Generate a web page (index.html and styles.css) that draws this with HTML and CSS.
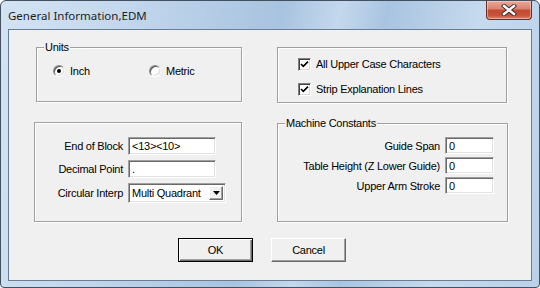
FILE: index.html
```html
<!DOCTYPE html>
<html>
<head>
<meta charset="utf-8">
<link rel="stylesheet" href="styles.css">
</head>
<body>
<div class="window">
  <div class="titlebar">
    <span class="title">General Information,EDM</span>
    <div class="close">
      <svg width="18" height="12" viewBox="0 0 18 12"><path d="M4 2 L14 10 M14 2 L4 10" stroke="#3a2a2a" stroke-width="4.2" stroke-linecap="square"/><path d="M4 2 L14 10 M14 2 L4 10" stroke="#fff" stroke-width="2.4" stroke-linecap="square"/></svg>
    </div>
  </div>
  <div class="client">
    <div class="groups">
      <div class="group units">
        <span class="legend">Units</span>
        <div class="radio-row">
          <span class="radio inch"><span class="rb"><span class="dot"></span></span>Inch</span>
          <span class="radio"><span class="rb"></span>Metric</span>
        </div>
      </div>
      <div class="group checks">
        <div class="check"><span class="cb"><svg width="9" height="9" viewBox="0 0 9 9"><path d="M1 4 L3.3 6.3 L8 1.6" fill="none" stroke="#000" stroke-width="1.7"/></svg></span>All Upper Case Characters</div>
        <div class="check"><span class="cb"><svg width="9" height="9" viewBox="0 0 9 9"><path d="M1 4 L3.3 6.3 L8 1.6" fill="none" stroke="#000" stroke-width="1.7"/></svg></span>Strip Explanation Lines</div>
      </div>
      <div class="group fields">
        <span class="lbl">End of Block</span><span class="edit">&lt;13&gt;&lt;10&gt;</span>
        <span class="lbl">Decimal Point</span><span class="edit">.</span>
        <span class="lbl">Circular Interp</span>
        <span class="combo"><span class="combo-text">Multi Quadrant</span><span class="drop"><svg width="7" height="4" viewBox="0 0 7 4"><path d="M0 0 H7 L3.5 4 Z" fill="#000"/></svg></span></span>
      </div>
      <div class="group machine">
        <span class="legend">Machine Constants</span>
        <span class="lbl">Guide Span</span><span class="edit">0</span>
        <span class="lbl">Table Height (Z Lower Guide)</span><span class="edit">0</span>
        <span class="lbl">Upper Arm Stroke</span><span class="edit">0</span>
      </div>
    </div>
    <div class="buttons">
      <span class="btn default">OK</span>
      <span class="btn">Cancel</span>
    </div>
  </div>
</div>
</body>
</html>
```
FILE: styles.css
```css
* { box-sizing: border-box; }
html, body { margin: 0; padding: 0; background: #fff; }
.window {
  width: 540px; height: 288px;
  border: 1px solid #44505e;
  border-radius: 6px 6px 4px 4px;
  background: linear-gradient(100deg, #d3e3f3 0%, #c2d7ed 22%, #a8c3e0 48%, #c4d8ed 58%, #a9c4e1 66%, #c6daee 82%, #bad1ea 100%);
  display: flex; flex-direction: column;
  font-family: "Liberation Sans", Arial, sans-serif;
  font-size: 11px; letter-spacing: -0.25px; color: #000;
  overflow: hidden;
}
.titlebar {
  height: 28px;
  display: flex; justify-content: space-between; align-items: flex-start;
  flex: none;
}
.title {
  font-family: "Noto Sans", "Open Sans", sans-serif;
  font-size: 11.5px; letter-spacing: 0;
  margin: 7px 0 0 7px;
  color: #1e1e1e;
}
.close {
  width: 46px; height: 19px;
  margin-right: 7px;
  border: 1px solid #6b2f24;
  border-top: none;
  border-radius: 0 0 4px 4px;
  background: linear-gradient(to bottom, #e9a99a 0%, #d7826e 45%, #c24a31 50%, #c7533a 80%, #d9866b 100%);
  display: flex; align-items: center; justify-content: center;
  box-shadow: inset 0 0 0 1px rgba(255,220,210,0.5);
}
.client {
  flex: 1;
  margin: 0 7px 6px 7px;
  border: 1px solid #6d7d91;
  background: #f0f0f0;
  display: flex; flex-direction: column;
}
.groups {
  display: grid;
  grid-template-columns: 208px 231px;
  column-gap: 35px;
  row-gap: 19px;
  padding: 17px 0 0 25px;
}
.group {
  position: relative;
  border: 1px solid #a0a0a0;
  box-shadow: 1px 1px 0 #fff, inset 1px 1px 0 #fff;
}
.legend {
  position: absolute;
  top: -7px; left: 7px;
  padding: 0 1px;
  background: #f0f0f0;
  line-height: 13px;
}
.units { margin-left: 2px; width: 206px; height: 55px; }
.radio-row { display: flex; padding: 17px 0 0 16px; }
.radio { display: flex; align-items: center; line-height: 12px; }
.radio.inch { width: 96px; }
.rb {
  width: 12px; height: 12px; border-radius: 50%;
  background: #fff;
  border: 1px solid; border-color: #8a8a8a #f4f4f4 #fff #8a8a8a;
  box-shadow: inset 1px 1px 0 #505050, inset -1px -1px 0 #dcdcdc;
  margin-right: 5px;
  display: flex; align-items: center; justify-content: center;
}
.dot { width: 4px; height: 4px; border-radius: 50%; background: #000; }
.checks { width: 230px; height: 56px; padding: 10px 0 0 20px; display: flex; flex-direction: column; gap: 12px; }
.check { display: flex; align-items: center; line-height: 13px; }
.cb {
  width: 13px; height: 13px; background: #fff;
  border: 1px solid; border-color: #808080 #fff #fff #808080;
  box-shadow: inset 1px 1px 0 #404040, inset -1px -1px 0 #d8d8d8;
  margin-right: 5px;
  display: flex; align-items: center; justify-content: center;
}
.fields {
  height: 100px;
  display: grid;
  grid-template-columns: 88px 98px;
  grid-auto-rows: min-content;
  column-gap: 5px;
  row-gap: 5px;
  padding-top: 14px;
  align-items: center;
}
.lbl { text-align: right; white-space: nowrap; }
.edit {
  width: 88px; height: 18px;
  background: #fff;
  border: 1px solid; border-color: #a0a0a0 #fff #fff #a0a0a0;
  box-shadow: inset 1px 1px 0 #696969, inset -1px -1px 0 #e3e3e3;
  padding: 2px 0 0 3px;
  line-height: 13px;
}
.combo {
  width: 98px; height: 20px;
  background: #fff;
  border: 1px solid; border-color: #a0a0a0 #fff #fff #a0a0a0;
  box-shadow: inset 1px 1px 0 #696969, inset -1px -1px 0 #e3e3e3;
  display: flex; align-items: center; justify-content: space-between;
  padding: 0 2px 0 3px;
}
.drop {
  width: 14px; height: 14px;
  background: #f0f0f0;
  border: 1px solid; border-color: #fff #696969 #696969 #fff;
  box-shadow: inset -1px -1px 0 #a0a0a0;
  display: flex; align-items: center; justify-content: center;
}
.machine {
  margin-top: 1px; height: 99px;
  display: grid;
  grid-template-columns: 162px 49px;
  grid-auto-rows: min-content;
  column-gap: 5px;
  row-gap: 3px;
  padding-top: 13px;
  align-items: center;
}
.machine .edit { width: 49px; height: 17px; }
.buttons { display: flex; gap: 18px; padding: 16px 0 0 169px; }
.btn {
  width: 75px; height: 24px;
  display: flex; align-items: center; justify-content: center;
  border: 1px solid; border-color: #fff #696969 #696969 #fff;
  box-shadow: inset -1px -1px 0 #a0a0a0;
  background: #f0f0f0;
}
.btn.default {
  border: 1px solid #000;
  box-shadow: inset 1px 1px 0 #fff, inset -1px -1px 0 #696969, inset -2px -2px 0 #a0a0a0;
}
```
